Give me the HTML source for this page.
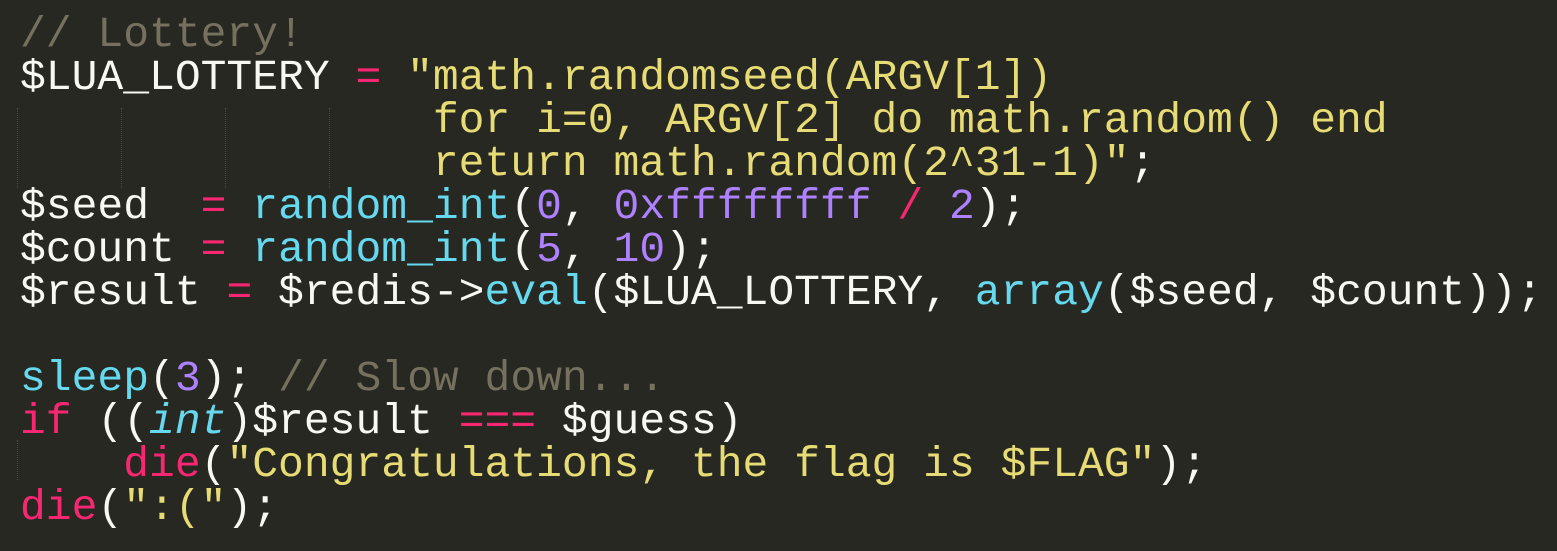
<!DOCTYPE html><html><head><style>
body{margin:0;background:#272822;width:1557px;height:551px;overflow:hidden;position:relative}
pre{margin:0;position:absolute;left:20px;top:13px;font:43px/43px "Liberation Mono",monospace;color:#f8f8f2;white-space:pre}
.c{color:#75715e}.s{color:#e6db74}.k{color:#f92672}.f{color:#66d9ef}.n{color:#ae81ff}.i{color:#66d9ef;font-style:italic}
.g{position:absolute;width:0;border-left:1px dotted #4a4a44}
</style></head><body>
<div class="g" style="left:17px;top:108px;height:80px"></div>
<div class="g" style="left:121px;top:108px;height:80px"></div>
<div class="g" style="left:225px;top:108px;height:80px"></div>
<div class="g" style="left:329px;top:108px;height:80px"></div>
<div class="g" style="left:17px;top:440px;height:40px"></div>
<pre><span class="c">// Lottery!</span>
$LUA_LOTTERY <span class="k">=</span> <span class="s">"math.randomseed(ARGV[1])
                for i=0, ARGV[2] do math.random() end
                return math.random(2^31-1)"</span>;
$seed  <span class="k">=</span> <span class="f">random_int</span>(<span class="n">0</span>, <span class="n">0xffffffff</span> <span class="k">/</span> <span class="n">2</span>);
$count <span class="k">=</span> <span class="f">random_int</span>(<span class="n">5</span>, <span class="n">10</span>);
$result <span class="k">=</span> $redis-&gt;<span class="f">eval</span>($LUA_LOTTERY, <span class="f">array</span>($seed, $count));

<span class="f">sleep</span>(<span class="n">3</span>); <span class="c">// Slow down...</span>
<span class="k">if</span> ((<span class="i">int</span>)$result <span class="k">===</span> $guess)
    <span class="k">die</span>(<span class="s">"Congratulations, the flag is $FLAG"</span>);
<span class="k">die</span>(<span class="s">":("</span>);</pre>
</body></html>
